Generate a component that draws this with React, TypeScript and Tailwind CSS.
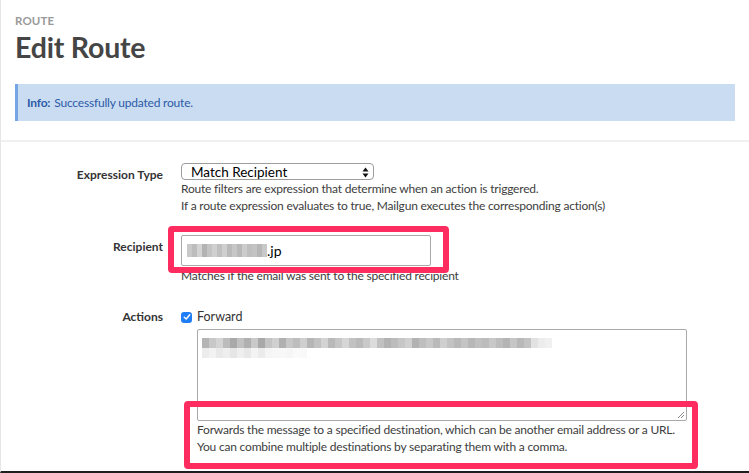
import React from 'react';

// pixelated (blurred) fragments from the original screenshot
const recipientBlur = [
  'bg-[#c9c9c9]', 'bg-[#bdbdbd]', 'bg-[#d4d4d4]', 'bg-[#b3b3b3]', 'bg-[#c4c4c4]',
  'bg-[#d0d0d0]', 'bg-[#c0c0c0]', 'bg-[#cfcfcf]', 'bg-[#bababa]', 'bg-[#c6c6c6]',
  'bg-[#b8b8b8]', 'bg-[#cccccc]', 'bg-[#bfbfbf]', 'bg-[#c3c3c3]', 'bg-[#b7b7b7]',
  'bg-[#c8c8c8]',
];

const forwardTop = [
  'bg-[#b4b4b4]', 'bg-[#c8c8c8]', 'bg-[#d4d4d4]', 'bg-[#bcbcbc]', 'bg-[#a9a9a9]',
  'bg-[#c1c1c1]', 'bg-[#b0b0b0]', 'bg-[#c9c9c9]', 'bg-[#a8a8a8]', 'bg-[#c4c4c4]',
  'bg-[#d0d0d0]', 'bg-[#b0b0b0]', 'bg-[#c7c7c7]', 'bg-[#bdbdbd]', 'bg-[#cfcfcf]',
  'bg-[#b5b5b5]', 'bg-[#c2c2c2]', 'bg-[#d3d3d3]', 'bg-[#b9b9b9]', 'bg-[#c6c6c6]',
  'bg-[#d6d6d6]', 'bg-[#c2c2c2]', 'bg-[#bababa]', 'bg-[#c9c9c9]', 'bg-[#dcdcdc]',
  'bg-[#c1c1c1]', 'bg-[#b3b3b3]', 'bg-[#bcbcbc]', 'bg-[#c6c6c6]', 'bg-[#d0d0d0]',
  'bg-[#b2b2b2]', 'bg-[#bebebe]', 'bg-[#c8c8c8]', 'bg-[#bababa]', 'bg-[#cfcfcf]',
  'bg-[#c3c3c3]', 'bg-[#b9b9b9]', 'bg-[#c4c4c4]', 'bg-[#b7b7b7]', 'bg-[#c0c0c0]',
  'bg-[#bcbcbc]', 'bg-[#c8c8c8]', 'bg-[#bdbdbd]', 'bg-[#b4b4b4]', 'bg-[#c6c6c6]',
  'bg-[#b8b8b8]', 'bg-[#c3c3c3]', 'bg-[#e2e2e2]', 'bg-[#ececec]', 'bg-[#f0f0f0]',
];

const forwardBottom = [
  'bg-[#ececec]', 'bg-[#f2f2f2]', 'bg-[#e9e9e9]', 'bg-[#eeeeee]', 'bg-[#e6e6e6]',
  'bg-[#efefef]', 'bg-[#e8e8e8]', 'bg-[#f3f3f3]', 'bg-[#ebebeb]', 'bg-[#f5f5f5]',
  'bg-[#f7f7f7]', 'bg-[#f8f8f8]', 'bg-[#f6f6f6]', 'bg-[#fafafa]', 'bg-[#f9f9f9]',
];

export default function App() {
  return (
    <div className="w-[749px] h-[473px] overflow-hidden bg-white border-l border-[#e6e6e6] border-b-2 border-b-[#1f1f1f] font-['Lato',sans-serif]">
      {/* header */}
      <div className="px-[14px] pt-[13px]">
        <div className="text-[11.5px] leading-[16px] font-bold uppercase text-[#9a9a9a] tracking-[0.1px]">Route</div>
        <h1 className="text-[28.5px] leading-[36px] font-bold text-[#454545] tracking-[-0.2px]">Edit Route</h1>
        <div className="mt-[19px] h-[37px] flex items-center bg-[#cadcf2] border-l-[3px] border-[#74a6e6] pl-[9px] text-[12px] tracking-[-0.2px] text-[#2c5ba6]">
          <span className="font-bold mr-[4px]">Info:</span>
          <span>Successfully updated route.</span>
        </div>
      </div>
      <div className="mt-[19px] h-[2px] bg-[#f0f0f0]" />

      {/* form */}
      <div className="pt-[21px] text-[12px] tracking-[-0.2px] text-[#3d3d3d]">
        <div className="flex">
          <div className="w-[162px] shrink-0 pt-[4px] text-right font-bold text-[#333] leading-[16px] tracking-[0px]">Expression Type</div>
          <div className="ml-[18px]">
            <div className="w-[193px] h-[17px] flex items-center justify-between border border-[#9d9d9d] rounded-[4px] pl-[9px] pr-[4px] text-[13.5px] tracking-[0px] text-black">
              <span className="leading-[16px]">Match Recipient</span>
              <svg width="7" height="11" viewBox="0 0 7 11" className="mt-[1px]">
                <path d="M3.5 0.5 L6.5 4.5 L0.5 4.5 Z" fill="#111" />
                <path d="M3.5 10.5 L6.5 6.5 L0.5 6.5 Z" fill="#111" />
              </svg>
            </div>
            <div className="leading-[17px] mt-[0px]">Route filters are expression that determine when an action is triggered.</div>
            <div className="leading-[17px]">If a route expression evaluates to true, Mailgun executes the corresponding action(s)</div>
          </div>
        </div>

        <div className="flex mt-[21px]">
          <div className="w-[162px] shrink-0 pt-[4px] text-right font-bold text-[#333] leading-[16px] tracking-[0px]">Recipient</div>
          <div className="ml-[18px] relative">
            <div className="w-[250px] h-[31px] flex items-center border border-[#a9a9a9] rounded-[2px] pl-[5px] text-[14px] tracking-[0px] text-black">
              <span className="flex h-[13px]">
                {recipientBlur.map((c, i) => (
                  <span key={i} className={`w-[5px] h-full ${c}`} />
                ))}
              </span>
              <span className="leading-[16px]">.jp</span>
            </div>
            <div className="leading-[17px] mt-[1px] whitespace-nowrap">Matches if the email was sent to the specified recipient</div>
            <div className="absolute left-[-13px] top-[-9px] w-[281px] h-[47px] border-[6px] border-[#ff2c60] rounded-[4px]" />
          </div>
        </div>

        <div className="flex mt-[25px]">
          <div className="w-[162px] shrink-0 text-right font-bold text-[#333] leading-[16px] tracking-[0px]">Actions</div>
          <div className="ml-[18px] relative">
            <div className="flex items-center h-[16px]">
              <span className="w-[11px] h-[11px] rounded-[3px] bg-[#1f7ef6] flex items-center justify-center">
                <svg width="8" height="8" viewBox="0 0 8 8">
                  <path d="M1.3 4.2 L3.2 6 L6.7 1.8" stroke="#fff" strokeWidth="1.5" fill="none" strokeLinecap="round" strokeLinejoin="round" />
                </svg>
              </span>
              <span className="ml-[5px] text-[12.5px] text-[#333] tracking-[0px]">Forward</span>
            </div>
            <div className="ml-[16px] mt-[4px] w-[490px] h-[92px] border border-[#a9a9a9] rounded-[2px] relative pt-[8px] pl-[4px]">
              <div className="flex h-[10px]">
                {forwardTop.map((c, i) => (
                  <span key={i} className={`w-[7px] h-full ${c}`} />
                ))}
              </div>
              <div className="flex h-[10px]">
                {forwardBottom.map((c, i) => (
                  <span key={i} className={`w-[7px] h-full ${c}`} />
                ))}
              </div>
              <svg width="8" height="8" viewBox="0 0 8 8" className="absolute right-[1px] bottom-[1px]">
                <path d="M7 1 L1 7 M7 4 L4 7" stroke="#888" strokeWidth="1" />
              </svg>
            </div>
            <div className="ml-[16px] leading-[17px] mt-[0px] whitespace-nowrap">Forwards the message to a specified destination, which can be another email address or a URL.</div>
            <div className="ml-[16px] leading-[18px] whitespace-nowrap">You can combine multiple destinations by separating them with a comma.</div>
            <div className="absolute left-[3px] top-[92px] w-[514px] h-[68px] border-[6px] border-[#ff2c60] rounded-[4px]" />
          </div>
        </div>
      </div>
    </div>
  );
}
